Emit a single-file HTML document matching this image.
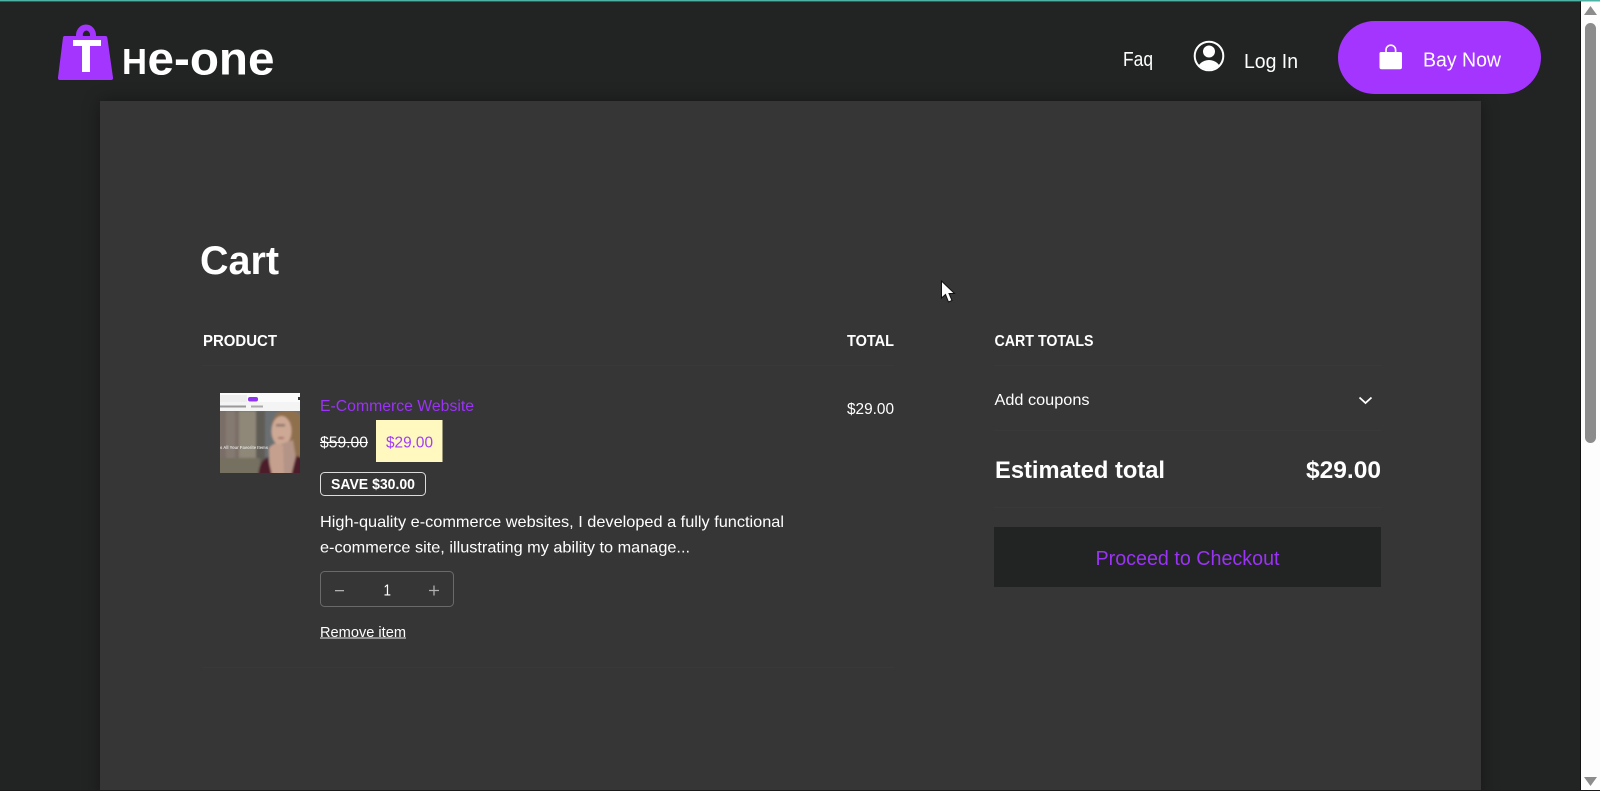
<!DOCTYPE html>
<html lang="en">
<head>
<meta charset="utf-8">
<title>Cart – The-one</title>
<style>
html,body{margin:0;padding:0;width:1600px;height:791px;overflow:hidden;background:#222323}
svg{display:block;position:absolute;left:0;top:0}
text{font-family:"Liberation Sans",sans-serif;fill:#fff}
.b{font-weight:700}
</style>
</head>
<body>
<svg width="1600" height="791" viewBox="0 0 1600 791" xmlns="http://www.w3.org/2000/svg">
<defs>
<filter id="sh" x="-5%" y="-5%" width="110%" height="110%"><feGaussianBlur stdDeviation="9"/></filter>
<filter id="bl" x="-20%" y="-20%" width="140%" height="140%"><feGaussianBlur stdDeviation="1"/></filter>
<clipPath id="th"><rect x="220" y="393" width="80" height="80"/></clipPath>
<clipPath id="ph"><rect x="220" y="411" width="80" height="62"/></clipPath>
<clipPath id="uc"><circle cx="1209" cy="56" r="13.5"/></clipPath>
</defs>
<rect width="1600" height="791" fill="#222323"/>
<rect x="0" y="0" width="1600" height="1.4" fill="#4db3a6"/>

<!-- panel -->
<rect x="100" y="101" width="1381" height="700" fill="#000" opacity=".35" filter="url(#sh)"/>
<rect x="100" y="101" width="1381" height="700" fill="#363636"/>

<!-- logo -->
<path d="M76 37V35a10 10.500 0 0 1 20 0V37H90V35a3.600 4.500 0 0 0-7.200 0V37Z" fill="#a435ff"/>
<path d="M64.500 36H105.500Q107 36 107.300 37.500L113 77.500Q113.300 80 111 80H60Q57.700 80 58 77.500L63 37.500Q63.300 36 64.500 36Z" fill="#a435ff"/>
<path d="M73 40H101V46H90V72H82V46H73Z" fill="#fff"/>
<text class="b" x="122" y="74" font-size="36" textLength="25" lengthAdjust="spacingAndGlyphs">H</text>
<text class="b" x="147.500" y="74.500" font-size="46" textLength="127" lengthAdjust="spacingAndGlyphs">e-one</text>

<!-- nav -->
<text x="1123" y="66" font-size="20" textLength="30" lengthAdjust="spacingAndGlyphs">Faq</text>
<circle cx="1209" cy="56" r="14.300" fill="none" stroke="#fff" stroke-width="2"/>
<circle cx="1209" cy="51.500" r="6" fill="#fff"/>
<ellipse cx="1209" cy="71" rx="12" ry="11" fill="#fff" clip-path="url(#uc)"/>
<text x="1244" y="68" font-size="20" textLength="54" lengthAdjust="spacingAndGlyphs">Log In</text>
<rect x="1338" y="21" width="203" height="73" rx="36.500" fill="#a435ff"/>
<path d="M1381 52H1400.500Q1402 52 1402 53.500V67Q1402 69.300 1400 69.300H1381.500Q1379.500 69.300 1379.500 67V53.500Q1379.500 52 1381 52Z" fill="#fff"/>
<path d="M1386 53V50a4.800 4.800 0 0 1 9.600 0V53" fill="none" stroke="#fff" stroke-width="1.600"/>
<text x="1423" y="66.500" font-size="20" textLength="78" lengthAdjust="spacingAndGlyphs">Bay Now</text>

<!-- heading -->
<text class="b" x="200" y="274" font-size="40" textLength="79" lengthAdjust="spacingAndGlyphs">Cart</text>

<!-- table heads -->
<text class="b" x="203" y="346" font-size="16" textLength="74" lengthAdjust="spacingAndGlyphs">PRODUCT</text>
<text class="b" x="847" y="346" font-size="16" textLength="47" lengthAdjust="spacingAndGlyphs">TOTAL</text>
<text class="b" x="994.500" y="346" font-size="16" textLength="99" lengthAdjust="spacingAndGlyphs">CART TOTALS</text>
<rect x="203" y="365" width="691" height="1" fill="#393939"/>
<rect x="994" y="365" width="387" height="1" fill="#393939"/>

<!-- thumbnail -->
<g clip-path="url(#th)">
<rect x="220" y="393" width="80" height="80" fill="#6c6a64"/>
<rect x="220" y="393" width="80" height="9" fill="#fbfbfb"/>
<rect x="220" y="395" width="27" height="7" fill="#eeeeee"/>
<rect x="248" y="397" width="10" height="4.500" rx="2" fill="#8f35f0"/>
<rect x="220" y="402" width="80" height="9" fill="#f4f4f4"/>
<rect x="220" y="405.500" width="26" height="2" fill="#999"/>
<rect x="251" y="405.500" width="12" height="2" fill="#aaa"/>
<rect x="298" y="397" width="2" height="3" fill="#333"/>
<g filter="url(#bl)" clip-path="url(#ph)">
<rect x="215" y="411" width="24" height="66" fill="#7a6e68"/>
<rect x="226" y="411" width="9" height="66" fill="#857a72"/>
<rect x="239" y="411" width="17" height="66" fill="#8f8878"/>
<rect x="256" y="411" width="9" height="66" fill="#5e5c56"/>
<rect x="265" y="411" width="40" height="66" fill="#6a7072"/>
<rect x="215" y="458" width="45" height="18" fill="#746f60"/>
<path d="M272 424Q274 410 288 410Q304 410 304 430L303 458H294L288 436Z" fill="#8f6f4e"/>
<ellipse cx="281.500" cy="431" rx="10" ry="15" fill="#cda995"/>
<path d="M281 444L293 440L296 458L304 460V480H266L270 462L280 456Z" fill="#b39486"/>
<path d="M269 448Q276 440 283 446L284 476H270Z" fill="#c6a08e"/>
<path d="M258 480Q258 461 268 457L273 480ZM290 480L296 456L304 458V480Z" fill="#4e1d2b"/>
<rect x="276" y="424" width="9" height="2.500" fill="#8f776a"/>
<rect x="278" y="437" width="6" height="2" fill="#a86f66"/>
</g>
<text x="220" y="449" font-size="4.500" class="b" textLength="48" lengthAdjust="spacingAndGlyphs" opacity=".75">s All Your Favorite Items</text>
</g>

<!-- product info -->
<text x="320" y="411" font-size="16" textLength="154" lengthAdjust="spacingAndGlyphs" style="fill:#9a33f5">E-Commerce Website</text>
<text x="320" y="447.500" font-size="16" textLength="48" lengthAdjust="spacingAndGlyphs">$59.00</text>
<rect x="320" y="442" width="48" height="1" fill="#fff"/>
<rect x="376" y="420" width="66.500" height="42" fill="#fff8bf"/>
<text x="386" y="447.500" font-size="16" textLength="47" lengthAdjust="spacingAndGlyphs" style="fill:#a23cff">$29.00</text>
<rect x="320.500" y="472.500" width="105" height="23" rx="4" fill="none" stroke="#dcdcdc" stroke-width="1"/>
<text class="b" x="331" y="489" font-size="14.500" textLength="84" lengthAdjust="spacingAndGlyphs">SAVE $30.00</text>
<text x="320" y="527" font-size="16" textLength="464" lengthAdjust="spacingAndGlyphs">High-quality e-commerce websites, I developed a fully functional</text>
<text x="320" y="552.500" font-size="16" textLength="370" lengthAdjust="spacingAndGlyphs">e-commerce site, illustrating my ability to manage...</text>

<!-- quantity -->
<rect x="320.500" y="571.500" width="133" height="35" rx="4" fill="none" stroke="#6a6a6a" stroke-width="1"/>
<rect x="335" y="590" width="9" height="1.300" fill="#b0b0b0"/>
<text x="383.500" y="595.500" font-size="16" textLength="7.500" lengthAdjust="spacingAndGlyphs">1</text>
<path d="M429 590.500H439M434 585.500V595.500" stroke="#b0b0b0" stroke-width="1.300" fill="none"/>
<text x="320" y="637" font-size="15" textLength="86" lengthAdjust="spacingAndGlyphs">Remove item</text>
<rect x="320" y="637.500" width="86" height="1" fill="#e8e8e8"/>
<rect x="203" y="667" width="691" height="1" fill="#393939"/>

<!-- line total -->
<text x="847" y="414" font-size="16" textLength="47" lengthAdjust="spacingAndGlyphs">$29.00</text>

<!-- totals -->
<text x="994.500" y="405" font-size="16" textLength="95" lengthAdjust="spacingAndGlyphs">Add coupons</text>
<path d="M1359.500 397.500L1365.500 403L1371.500 397.500" fill="none" stroke="#fff" stroke-width="1.800"/>
<rect x="994" y="430" width="387" height="1" fill="#393939"/>
<text class="b" x="995" y="478" font-size="24" textLength="170" lengthAdjust="spacingAndGlyphs">Estimated total</text>
<text class="b" x="1306" y="478" font-size="24" textLength="75" lengthAdjust="spacingAndGlyphs">$29.00</text>
<rect x="994" y="507" width="387" height="1" fill="#393939"/>
<rect x="994" y="527" width="387" height="60" fill="#222323"/>
<text x="1095.500" y="565" font-size="20" textLength="184" lengthAdjust="spacingAndGlyphs" style="fill:#9a33f5">Proceed to Checkout</text>

<!-- mouse cursor -->
<path d="M941.500 281V298L945.500 294.500L948.500 302L952 300.500L949 293.500H954.500Z" fill="#fff" stroke="#111" stroke-width="1"/>

<!-- scrollbar -->
<rect x="1580" y="1.400" width="1" height="790" fill="#111"/>
<rect x="1581" y="1.400" width="19" height="790" fill="#fdfdfd"/>
<path d="M1584 15L1590.500 6L1597 15Z" fill="#8c8c8c"/>
<rect x="1585" y="23" width="11" height="420" rx="5.500" fill="#8c8c8c"/>
<path d="M1584 777L1590.500 786L1597 777Z" fill="#8c8c8c"/>
<rect x="0" y="790" width="1600" height="1" fill="#1a1a1a"/>
</svg>
</body>
</html>
